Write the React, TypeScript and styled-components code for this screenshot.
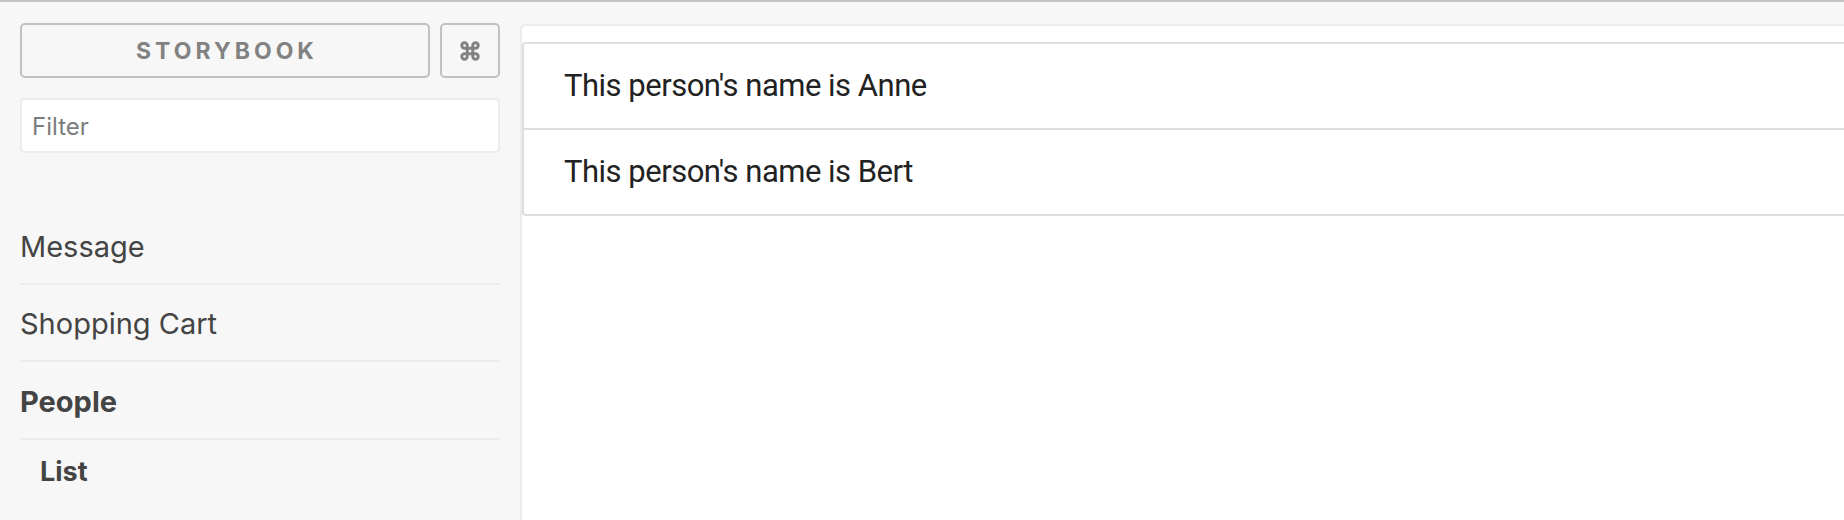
import React from "react";
import styled, { createGlobalStyle } from "styled-components";
import { Command } from "lucide-react";

const GlobalStyle = createGlobalStyle`
  html, body {
    margin: 0;
    padding: 0;
  }
  body {
    background: #f7f7f7;
    border-top: 2px solid #c4c4c4;
    overflow: hidden;
    font-family: Inter, "Helvetica Neue", Arial, sans-serif;
  }
  * { box-sizing: border-box; }
`;

const Layout = styled.div`
  display: flex;
  align-items: flex-start;
  width: calc(100% + 40px);
  height: 518px;
`;

const Sidebar = styled.aside`
  flex: 0 0 520px;
  padding: 21px 20px 0 20px;
  display: flex;
  flex-direction: column;
`;

const HeaderRow = styled.div`
  display: flex;
  gap: 10px;
`;

const HeaderButton = styled.button<{ $square?: boolean }>`
  flex: ${(p) => (p.$square ? "0 0 60px" : "1 1 auto")};
  height: 55px;
  border: 2px solid #c1c1c1;
  border-radius: 5px;
  background: #f7f7f7;
  color: #828282;
  font-family: Inter, "Helvetica Neue", Arial, sans-serif;
  font-weight: 700;
  font-size: 23px;
  letter-spacing: ${(p) => (p.$square ? "0" : "4px")};
  text-indent: ${(p) => (p.$square ? "0" : "4px")};
  padding: 0;
  display: flex;
  align-items: center;
  justify-content: center;
  cursor: pointer;
`;

const FilterInput = styled.input`
  margin-top: 20px;
  width: 100%;
  height: 55px;
  border: 2px solid #ececec;
  border-radius: 4px;
  background: #fff;
  padding: 2px 10px 0;
  font-family: Inter, "Helvetica Neue", Arial, sans-serif;
  font-size: 24px;
  color: #333;
  outline: none;
  &::placeholder {
    color: #7c7c7c;
  }
`;

const StoryList = styled.ul`
  list-style: none;
  margin: 54px 0 0 0;
  padding: 0;
`;

const Kind = styled.li<{ $active?: boolean }>`
  padding: 21.5px 0 18px 0;
  font-size: 29px;
  line-height: 36px;
  color: #444;
  font-weight: ${(p) => (p.$active ? 700 : 400)};
  border-bottom: 2px solid #ececec;
`;

const Story = styled.li`
  padding: 14px 0 0 20px;
  font-size: 27px;
  line-height: 36px;
  font-weight: 700;
  color: #444;
`;

const Preview = styled.main`
  flex: 1 1 auto;
  margin-top: 22px;
  height: 520px;
  background: #fff;
  border: 2px solid #ececec;
  border-radius: 6px;
  padding-top: 16px;
`;

const Card = styled.div`
  border: 2px solid #dedede;
  border-radius: 4px;
  background: #fff;
`;

const Row = styled.div`
  padding: 24px 40px;
  font-family: Roboto, Arial, sans-serif;
  font-size: 31px;
  letter-spacing: -0.5px;
  line-height: 36px;
  color: #222;
  & + & {
    border-top: 2px solid #dedede;
  }
`;

const people = ["Anne", "Bert"];

export default function App() {
  return (
    <>
      <GlobalStyle />
      <Layout>
        <Sidebar>
          <HeaderRow>
            <HeaderButton>STORYBOOK</HeaderButton>
            <HeaderButton $square aria-label="Keyboard shortcuts">
              <Command size={22} strokeWidth={3.2} color="#828282" />
            </HeaderButton>
          </HeaderRow>
          <FilterInput placeholder="Filter" />
          <StoryList>
            <Kind>Message</Kind>
            <Kind>Shopping Cart</Kind>
            <Kind $active>People</Kind>
            <Story>List</Story>
          </StoryList>
        </Sidebar>
        <Preview>
          <Card>
            {people.map((name) => (
              <Row key={name}>This person's name is {name}</Row>
            ))}
          </Card>
        </Preview>
      </Layout>
    </>
  );
}
